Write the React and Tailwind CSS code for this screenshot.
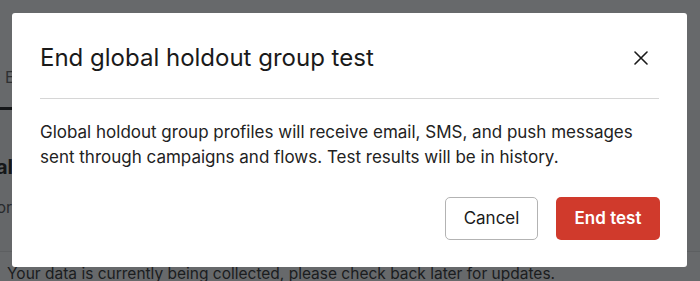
import React from "react";

const CloseIcon = () => (
  <svg width="14" height="14" viewBox="0 0 14 14" fill="none" aria-hidden="true">
    <path d="M1 1L13 13M13 1L1 13" stroke="#1a1a1a" strokeWidth="1.6" strokeLinecap="round" />
  </svg>
);

const App = () => {
  return (
    <div
      className="relative w-[700px] h-[281px] overflow-hidden bg-white"
      style={{ fontFamily: 'Inter, "Liberation Sans", Arial, sans-serif' }}
    >
      {/* page behind the dialog */}
      <div className="flex flex-col">
        <div className="h-[110px] flex items-end">
          <div className="h-[50px] pl-[5px] pr-6 border-b-[3px] border-[#222] flex items-start pt-[5px] text-[16px] text-[#666]">
            Emails
          </div>
        </div>
        <div className="h-[142px] bg-[#fafafa] border-b border-[#e3e3e3] pt-[44px]">
          <div className="w-[13px] overflow-hidden flex justify-end">
            <p className="text-[20px] font-bold text-[#222] leading-[26px] whitespace-nowrap">Global</p>
          </div>
          <div className="mt-[17px] w-[12px] overflow-hidden flex justify-end">
            <p className="text-[16px] text-[#555] leading-[20px] whitespace-nowrap">Monitor</p>
          </div>
        </div>
        <p className="pl-[7px] pt-[12px] text-[15.5px] text-[#333] leading-[20px] whitespace-nowrap">
          Your data is currently being collected, please check back later for updates.
        </p>
      </div>

      {/* overlay */}
      <div className="absolute inset-0 bg-[#0f1114]/[0.63] flex items-start pl-[12px] pt-[13px]">
        <div className="w-[675px] h-[254px] bg-white rounded-[3px] flex flex-col">
          <div className="mx-[28px] pt-[29px] pb-[24px] border-b border-[#d6d6d6] flex items-center justify-between">
            <h2 className="text-[24px] leading-[32px] text-[#1a1a1a] font-normal">
              End global holdout group test
            </h2>
            <button type="button" className="mr-[11px] flex items-center justify-center">
              <CloseIcon />
            </button>
          </div>

          <p className="px-[28px] pt-[21px] text-[17px] leading-[25px] text-[#222]">
            Global holdout group profiles will receive email, SMS, and push messages
            <br />
            sent through campaigns and flows. Test results will be in history.
          </p>

          <div className="mt-[27px] px-[27px] flex justify-end gap-[18px]">
            <button
              type="button"
              className="h-[43px] w-[93px] rounded-[5px] border border-[#b3b3b3] bg-white text-[17px] text-[#1a1a1a]"
            >
              Cancel
            </button>
            <button
              type="button"
              className="h-[43px] w-[104px] rounded-[5px] bg-[#d03a2c] text-[17px] font-semibold text-white"
            >
              End test
            </button>
          </div>
        </div>
      </div>
    </div>
  );
};

export default App;
